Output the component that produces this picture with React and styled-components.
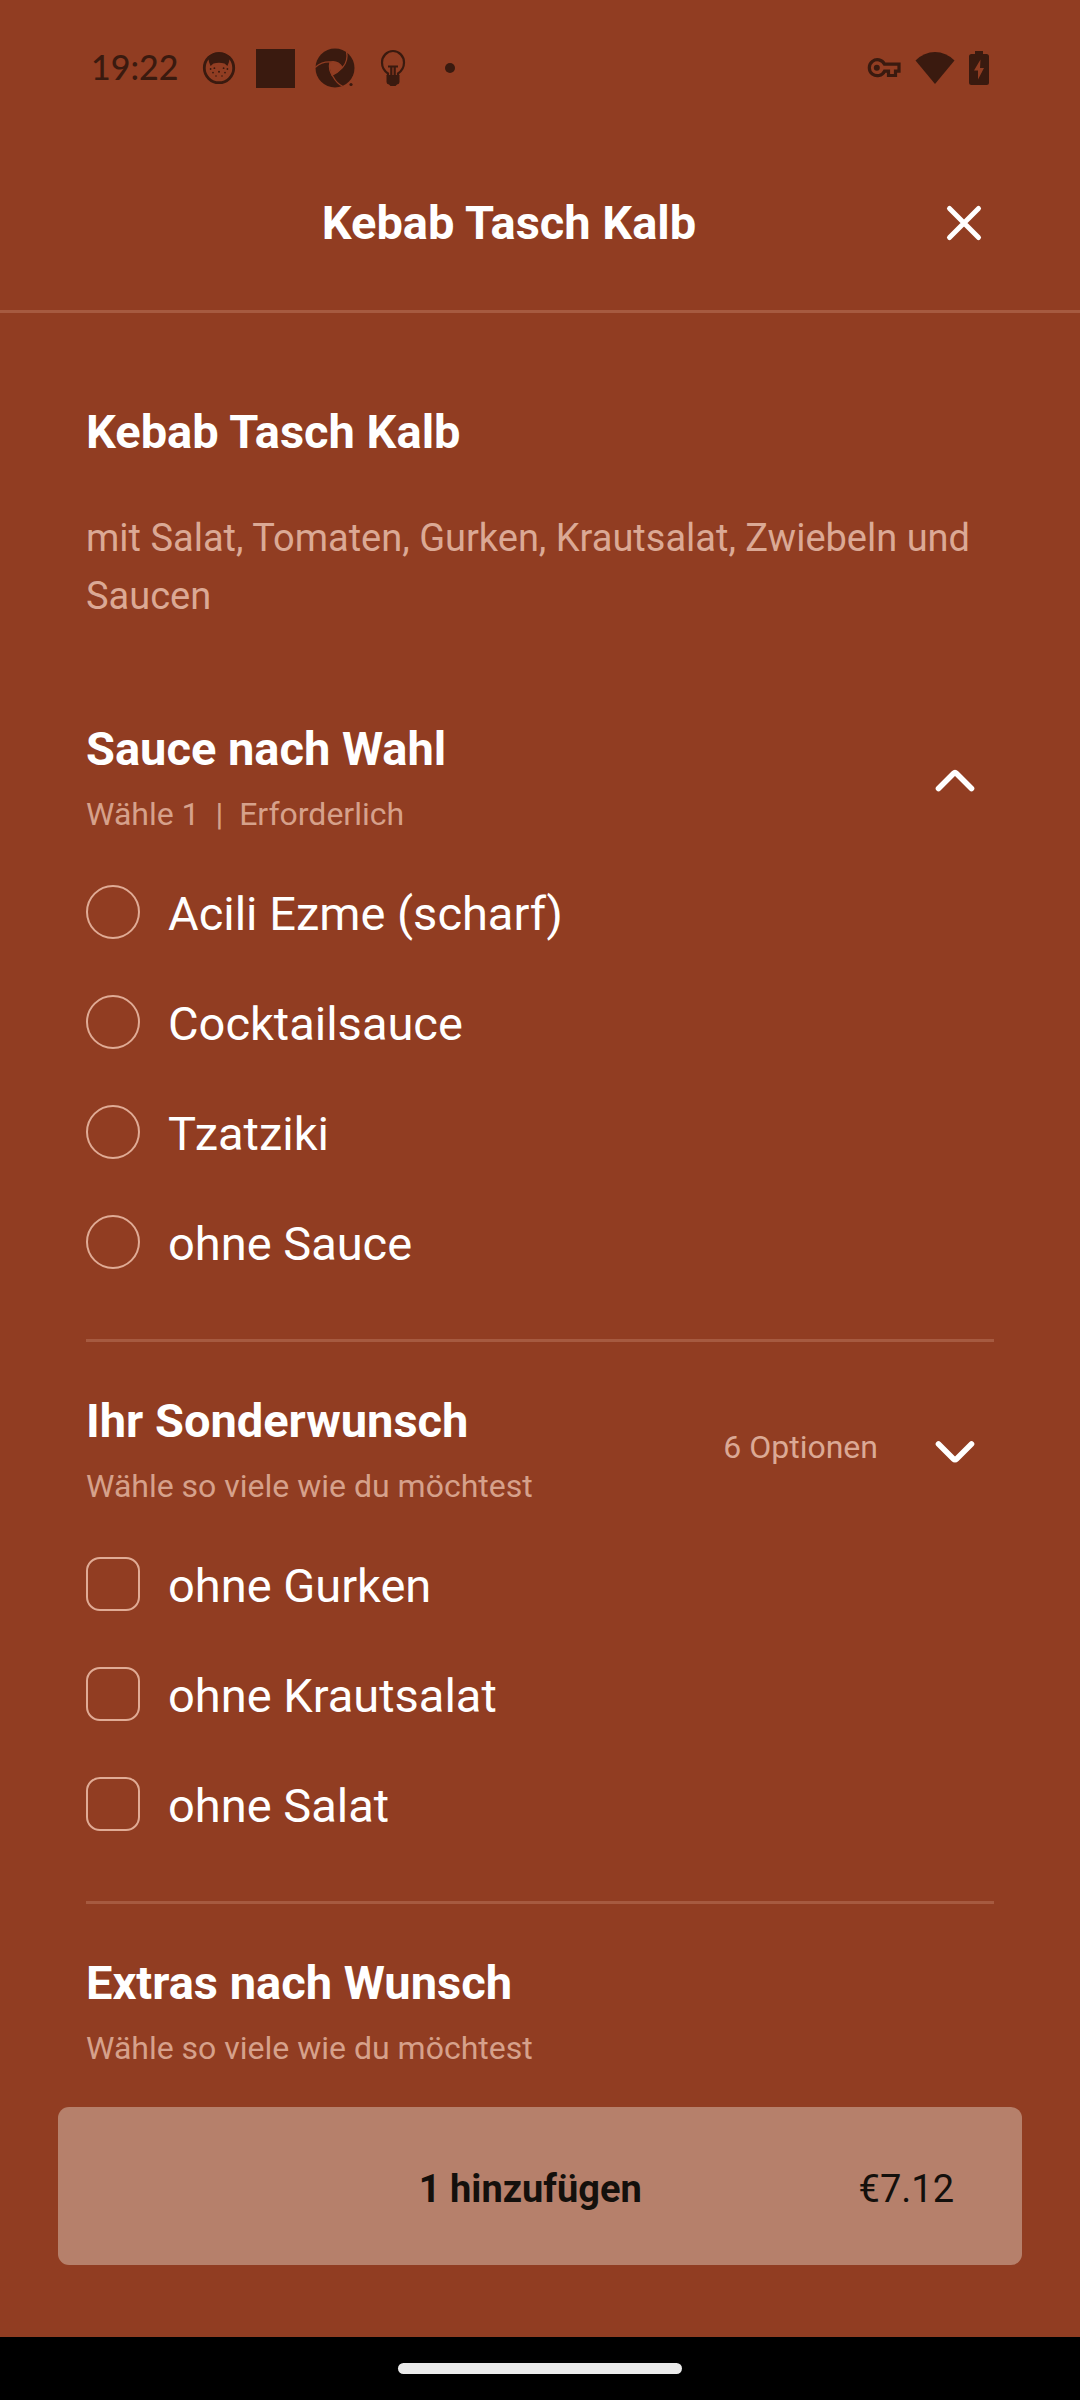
import React, { useState } from "react";
import styled, { createGlobalStyle } from "styled-components";

const GROUPS = [
  {
    id: "sauce",
    title: "Sauce nach Wahl",
    hint: "Wähle 1  |  Erforderlich",
    type: "radio",
    expanded: true,
    options: ["Acili Ezme (scharf)", "Cocktailsauce", "Tzatziki", "ohne Sauce"],
  },
  {
    id: "sonderwunsch",
    title: "Ihr Sonderwunsch",
    hint: "Wähle so viele wie du möchtest",
    type: "checkbox",
    count: "6 Optionen",
    expanded: false,
    options: ["ohne Gurken", "ohne Krautsalat", "ohne Salat"],
  },
  {
    id: "extras",
    title: "Extras nach Wunsch",
    hint: "Wähle so viele wie du möchtest",
    type: "checkbox",
    options: [],
  },
];

function CatIcon() {
  return (
    <svg width="34" height="34" viewBox="0 0 34 34" fill="#3a1a0f">
      <circle cx="17" cy="17" r="14.7" fill="none" stroke="#3a1a0f" strokeWidth="2.8" />
      <path d="M7 5 Q17 -1 27 5 Q28.5 9 25.4 15 L22.5 12.4 Q17 11 11.5 12.4 L8.6 15 Q5.5 9 7 5Z" />
      <circle cx="8.6" cy="18" r="0.9" />
      <circle cx="12.4" cy="17.2" r="0.9" />
      <circle cx="21.6" cy="17.2" r="0.9" />
      <circle cx="25.4" cy="18" r="0.9" />
      <circle cx="11" cy="21.6" r="0.9" />
      <circle cx="17" cy="20.8" r="1" />
      <circle cx="23" cy="21.6" r="0.9" />
      <circle cx="14" cy="25" r="0.8" />
      <circle cx="20" cy="25" r="0.8" />
    </svg>
  );
}

function ApertureIcon() {
  return (
    <svg width="40" height="40" viewBox="0 0 40 40">
      <circle cx="20" cy="20" r="19.5" fill="#3a1a0f" />
      <path d="M15 14.5 Q22 11.5 27.5 19.5 Q24 24 17 27.5 Q14 20 15 14.5Z" fill="#913d22" />
      <g fill="none" stroke="#913d22" strokeWidth="1.3">
        <path d="M0 19.5 Q7 13.5 15.5 14 Q23 12.5 27.5 19.5" />
        <path d="M31.5 3 Q33.5 13 27.5 19.5 Q23 24.5 16.5 27.5" />
        <path d="M15 14 Q13 22 18 28.5 Q22 36 28 38.5" />
      </g>
      <circle cx="36" cy="36.5" r="1.6" fill="#3a1a0f" />
    </svg>
  );
}

function BulbIcon() {
  return (
    <svg width="36" height="38" viewBox="-5 0 36 38">
      <path
        d="M8 27 V24.5 Q2 20.5 2 13.5 A11 11.5 0 0 1 24 13.5 Q24 20.5 18 24.5 V27"
        fill="none"
        stroke="#3a1a0f"
        strokeWidth="2.2"
      />
      <path d="M6.5 26 H19.5 V33 Q19.5 35 17 35.5 L15.5 37 H10.5 L9 35.5 Q6.5 35 6.5 33Z" fill="#3a1a0f" />
      <path d="M8 17.5 H18 M11.3 18 V27 M14.7 18 V27" fill="none" stroke="#3a1a0f" strokeWidth="2.2" />
    </svg>
  );
}

function KeyIcon() {
  return (
    <svg width="34" height="20" viewBox="0 0 34 20">
      <path
        d="M17.5 6.2 A8 8 0 1 0 17.5 13.2 H21.5 V17.5 H28.5 V13.2 H32 V6.2Z"
        fill="none"
        stroke="#3a1a0f"
        strokeWidth="3.2"
      />
      <circle cx="9.8" cy="9.8" r="3" fill="#3a1a0f" />
    </svg>
  );
}

function WifiIcon() {
  return (
    <svg width="40" height="34" viewBox="0 0 40 34">
      <path d="M0.5 9.5 Q9 1 20 1 Q31 1 39.5 9.5 L20 33Z" fill="#3a1a0f" />
    </svg>
  );
}

function BatteryIcon() {
  return (
    <svg width="20" height="34" viewBox="0 0 20 34">
      <path
        d="M6 0 H14 V3 H17.5 Q20 3 20 5.5 V31.5 Q20 34 17.5 34 H2.5 Q0 34 0 31.5 V5.5 Q0 3 2.5 3 H6Z"
        fill="#3a1a0f"
      />
      <path d="M11.5 8.5 L5 19.5 H9 V28.5 L15 17 H11Z" fill="#913d22" />
    </svg>
  );
}

function CloseIcon() {
  return (
    <svg width="40" height="40" viewBox="0 0 40 40">
      <path d="M6.5 5.5 L35.5 34.5 M35.5 5.5 L6.5 34.5" stroke="#ffffff" strokeWidth="5" strokeLinecap="round" />
    </svg>
  );
}

function Chevron({ up }) {
  return (
    <svg width="48" height="48" viewBox="0 0 48 48">
      <path
        d={up ? "M7.5 35.5 L22.5 20.5 Q24 19 25.5 20.5 L40.5 35.5" : "M7.5 19 L22.5 34 Q24 35.5 25.5 34 L40.5 19"}
        fill="none"
        stroke="#ffffff"
        strokeWidth="5.6"
        strokeLinecap="round"
      />
    </svg>
  );
}

function OptionGroup({ group }) {
  const [expanded, setExpanded] = useState(group.expanded);

  return (
    <Group>
      <GroupHead>
        <GroupTexts>
          <Heading>{group.title}</Heading>
          <Hint>{group.hint}</Hint>
        </GroupTexts>
        {group.count && <Count>{group.count}</Count>}
        {group.options.length > 0 && (
          <IconButton
            type="button"
            aria-label={group.title}
            aria-expanded={expanded}
            onClick={() => setExpanded(!expanded)}
          >
            <Chevron up={expanded} />
          </IconButton>
        )}
      </GroupHead>
      {group.options.length > 0 && (
        <Options>
          {group.options.map((option) => (
            <Option key={option}>
              <Tick type={group.type} name={group.id} value={option} />
              {option}
            </Option>
          ))}
        </Options>
      )}
    </Group>
  );
}

export default function App() {
  return (
    <Page>
      <GlobalStyle />
      <StatusBar>
        <Clock>19:22</Clock>
        <Notifications>
          <CatIcon />
          <Square />
          <ApertureIcon />
          <BulbIcon />
          <Dot />
        </Notifications>
        <SystemIcons>
          <KeyIcon />
          <WifiIcon />
          <BatteryIcon />
        </SystemIcons>
      </StatusBar>
      <Header>
        <Title>Kebab Tasch Kalb</Title>
        <IconButton type="button" aria-label="Schließen">
          <CloseIcon />
        </IconButton>
      </Header>
      <Main>
        <Heading>Kebab Tasch Kalb</Heading>
        <Description>mit Salat, Tomaten, Gurken, Krautsalat, Zwiebeln und Saucen</Description>
        {GROUPS.map((group) => (
          <OptionGroup key={group.id} group={group} />
        ))}
      </Main>
      <Footer>
        <AddButton type="button">
          <AddLabel>1 hinzufügen</AddLabel>
          <span>€7.12</span>
        </AddButton>
      </Footer>
      <NavBar>
        <NavHandle />
      </NavBar>
    </Page>
  );
}

const GlobalStyle = createGlobalStyle`
  * {
    box-sizing: border-box;
  }
  body {
    margin: 0;
    background-color: #913d22;
  }
  svg {
    display: block;
    flex-shrink: 0;
  }
`;
const Page = styled.div`
  display: flex;
  flex-direction: column;
  min-height: 100vh;
  background-color: #913d22;
  color: #ffffff;
  font-family: Roboto, "Liberation Sans", sans-serif;
`;
const StatusBar = styled.div`
  display: flex;
  align-items: center;
  height: 136px;
  padding: 0 91px;
  color: #3a1a0f;
`;
const Clock = styled.div`
  width: 88px;
  padding-bottom: 2px;
  font-family: Lato, sans-serif;
  font-size: 34px;
  font-weight: 500;
  line-height: 40px;
`;
const Notifications = styled.div`
  display: flex;
  flex: 1;
  align-items: center;
  gap: 20px;
  margin-left: 23px;
`;
const Square = styled.div`
  width: 39px;
  height: 39px;
  background-color: #3a1a0f;
`;
const Dot = styled.div`
  width: 10px;
  height: 10px;
  margin-left: 14px;
  border-radius: 50%;
  background-color: #3a1a0f;
`;
const SystemIcons = styled.div`
  display: flex;
  align-items: center;
  gap: 14px;
`;
const Header = styled.header`
  display: flex;
  align-items: center;
  height: 177px;
  padding: 0 86px;
  border-bottom: 3px solid #a65a40;
`;
const Title = styled.h1`
  flex: 1;
  margin: 0;
  font-size: 47px;
  font-weight: 700;
  line-height: 58px;
  text-align: center;
`;
const IconButton = styled.button`
  display: flex;
  align-items: center;
  justify-content: center;
  width: 62px;
  height: 62px;
  padding: 0;
  border: none;
  background: none;
  cursor: pointer;
`;
const Main = styled.main`
  flex: 1;
  padding: 90px 86px 0;
`;
const Heading = styled.h2`
  margin: 0;
  font-size: 47px;
  font-weight: 700;
  line-height: 58px;
`;
const Description = styled.p`
  margin: 48px 0 45px;
  color: #dba995;
  font-size: 38px;
  line-height: 58px;
`;
const Group = styled.section`
  padding: 50px 0 41px;
  border-bottom: 3px solid #a65a40;
  &:last-child {
    padding-bottom: 0;
    border-bottom: none;
  }
`;
const GroupHead = styled.div`
  display: flex;
  align-items: center;
  padding-right: 8px;
`;
const GroupTexts = styled.div`
  flex: 1;
`;
const Hint = styled.p`
  margin: 16px 0 0;
  color: #d6a18b;
  font-size: 32px;
  line-height: 40px;
  white-space: pre-wrap;
`;
const Count = styled.span`
  margin-right: 46px;
  padding-bottom: 4px;
  color: #dba995;
  font-size: 32px;
  line-height: 40px;
`;
const Options = styled.div`
  display: flex;
  flex-direction: column;
  margin-top: 24px;
`;
const Option = styled.label`
  display: flex;
  align-items: center;
  gap: 28px;
  height: 110px;
  padding-top: 2px;
  font-size: 47px;
  line-height: 58px;
  cursor: pointer;
`;
const Tick = styled.input`
  appearance: none;
  flex-shrink: 0;
  width: 54px;
  height: 54px;
  margin: 0 0 4px;
  border: 2px solid #e0ab95;
  border-radius: ${(props) => (props.type === "radio" ? "50%" : "14px")};
  &:checked {
    background-color: #e0ab95;
  }
`;
const Footer = styled.footer`
  padding: 0 58px 72px;
`;
const AddButton = styled.button`
  display: flex;
  align-items: center;
  width: 100%;
  height: 158px;
  padding: 6px 68px 0 144px;
  border: none;
  border-radius: 11px;
  background-color: #b6806b;
  color: #14100c;
  font-family: inherit;
  font-size: 38px;
  line-height: 58px;
  cursor: pointer;
`;
const AddLabel = styled.span`
  flex: 1;
  font-weight: 700;
`;
const NavBar = styled.div`
  display: flex;
  align-items: center;
  justify-content: center;
  height: 63px;
  background-color: #000000;
`;
const NavHandle = styled.div`
  width: 284px;
  height: 11px;
  border-radius: 6px;
  background-color: #ebebeb;
`;
